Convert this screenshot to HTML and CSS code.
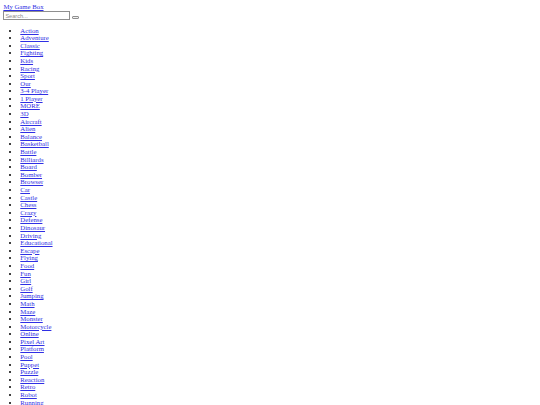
FILE: index.html
```html
<!DOCTYPE html>
<html lang="en">
<head>
<meta charset="utf-8">
<title>My Game Box</title>
<link rel="stylesheet" href="styles.css">
</head>
<body>
<div class="header">
  <a href="#" class="logo">My Game Box</a>
  <form class="search">
    <input type="text" class="search-input" placeholder="Search..."><button type="submit" class="search-btn"></button>
  </form>
</div>
<ul class="nav">
  <li><a href="#">Action</a></li>
  <li><a href="#">Adventure</a></li>
  <li><a href="#">Classic</a></li>
  <li><a href="#">Fighting</a></li>
  <li><a href="#">Kids</a></li>
  <li><a href="#">Racing</a></li>
  <li><a href="#">Sport</a></li>
  <li><a href="#">Our</a></li>
  <li><a href="#">3-4 Player</a></li>
  <li><a href="#">1 Player</a></li>
  <li><a href="#">MORE</a></li>
  <li><a href="#">3D</a></li>
  <li><a href="#">Aircraft</a></li>
  <li><a href="#">Alien</a></li>
  <li><a href="#">Balance</a></li>
  <li><a href="#">Basketball</a></li>
  <li><a href="#">Battle</a></li>
  <li><a href="#">Billiards</a></li>
  <li><a href="#">Board</a></li>
  <li><a href="#">Bomber</a></li>
  <li><a href="#">Browser</a></li>
  <li><a href="#">Car</a></li>
  <li><a href="#">Castle</a></li>
  <li><a href="#">Chess</a></li>
  <li><a href="#">Crazy</a></li>
  <li><a href="#">Defense</a></li>
  <li><a href="#">Dinosaur</a></li>
  <li><a href="#">Driving</a></li>
  <li><a href="#">Educational</a></li>
  <li><a href="#">Escape</a></li>
  <li><a href="#">Flying</a></li>
  <li><a href="#">Food</a></li>
  <li><a href="#">Fun</a></li>
  <li><a href="#">Girl</a></li>
  <li><a href="#">Golf</a></li>
  <li><a href="#">Jumping</a></li>
  <li><a href="#">Math</a></li>
  <li><a href="#">Maze</a></li>
  <li><a href="#">Monster</a></li>
  <li><a href="#">Motorcycle</a></li>
  <li><a href="#">Online</a></li>
  <li><a href="#">Pixel Art</a></li>
  <li><a href="#">Platform</a></li>
  <li><a href="#">Pool</a></li>
  <li><a href="#">Puppet</a></li>
  <li><a href="#">Puzzle</a></li>
  <li><a href="#">Reaction</a></li>
  <li><a href="#">Retro</a></li>
  <li><a href="#">Robot</a></li>
  <li><a href="#">Running</a></li>
</ul>
</body>
</html>
```
FILE: styles.css
```css
html {
  overflow: hidden;
}
body {
  margin: 3.4px;
  font-family: "Liberation Serif", "Times New Roman", serif;
  font-size: 6.75px;
  line-height: 7.6px;
}
a {
  color: #2f2fe4;
}
.logo {
  display: inline-block;
  height: 7.6px;
}
.search {
  margin: 0;
  display: flex;
  align-items: flex-end;
  height: 8.8px;
}
.search-input {
  box-sizing: border-box;
  width: 67px;
  height: 8.4px;
  margin: 0;
  padding: 0 1px;
  border: 0.5px solid #8f8f8f;
  font-family: "Liberation Sans", Arial, sans-serif;
  font-size: 5.6px;
  line-height: 7px;
  background: #fff;
}
.search-input::placeholder {
  color: #8a8a8a;
}
.search-btn {
  box-sizing: border-box;
  width: 6.8px;
  height: 2.6px;
  margin: 0 0 1.2px 1.8px;
  padding: 0;
  border: 0.5px solid #8f8f8f;
  border-radius: 1px;
  background: #efefef;
}
.nav {
  margin: 6.75px 0 0;
  padding-left: 16.9px;
  list-style: disc;
}
.nav li {
  height: 7.6px;
}
```
